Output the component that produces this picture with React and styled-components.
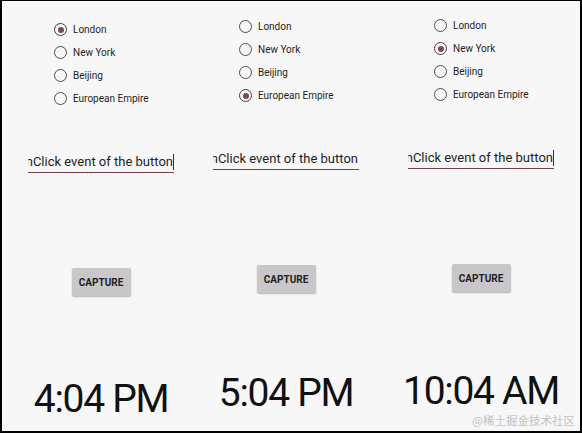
import React from "react";
import styled, { createGlobalStyle } from "styled-components";

const GlobalStyle = createGlobalStyle`
  html, body {
    margin: 0;
    padding: 0;
    background: #000;
  }
  * {
    box-sizing: border-box;
  }
`;

const Frame = styled.div`
  position: relative;
  width: 582px;
  height: 433px;
  border-style: solid;
  border-color: #000;
  border-width: 1px 2px 2px 2px;
  background: #f7f7f7;
  overflow: hidden;
  display: flex;
  font-family: Roboto, "Noto Sans", sans-serif;
  color: #1e1e1e;
`;

const Column = styled.div`
  width: ${(p) => p.$width}px;
  flex: none;
  display: flex;
  flex-direction: column;
  align-items: center;
  padding-top: ${(p) => p.$top}px;
  padding-left: ${(p) => (p.$dx > 0 ? p.$dx * 2 : 0)}px;
  padding-right: ${(p) => (p.$dx < 0 ? -p.$dx * 2 : 0)}px;
`;

const RadioGroup = styled.div`
  width: 94px;
  display: flex;
  flex-direction: column;
`;

const RadioRow = styled.label`
  height: 23px;
  display: flex;
  align-items: center;
  gap: 6px;
  font-size: 10px;
  white-space: nowrap;
  color: #1e1e1e;
`;

const RadioCircle = styled.span`
  width: 13px;
  height: 13px;
  flex: none;
  border-radius: 50%;
  border: 1.7px solid ${(p) => (p.$checked ? "#4a3a40" : "#4d4d4d")};
  display: flex;
  align-items: center;
  justify-content: center;

  &::after {
    content: "";
    width: 6px;
    height: 6px;
    border-radius: 50%;
    background: ${(p) => (p.$checked ? "#7a4658" : "transparent")};
  }
`;

const Field = styled.div`
  margin-top: 44px;
  width: 146px;
  display: flex;
  align-items: flex-end;
  border-bottom: 1.5px solid #7c3d4d;
  padding-bottom: 2px;
`;

const FieldText = styled.div`
  flex: 1;
  min-width: 0;
  overflow: hidden;
  display: flex;
  justify-content: flex-end;
  font-size: 13px;
  line-height: 16px;
  white-space: nowrap;
  color: #1e1e1e;
`;

const Caret = styled.span`
  width: 1px;
  height: 16px;
  flex: none;
  background: ${(p) => (p.$show ? "#333" : "transparent")};
`;

const CaptureButton = styled.button`
  margin-top: 95px;
  width: 59px;
  height: 28px;
  border: none;
  border-radius: 2px;
  background: #c9c7c9;
  box-shadow: 0 1px 1.5px rgba(0, 0, 0, 0.28);
  font-family: Roboto, "Noto Sans", sans-serif;
  font-weight: 700;
  font-size: 10px;
  color: #222;
  padding: 0;
`;

const Clock = styled.div`
  margin-top: ${(p) => p.$gap}px;
  font-size: 39px;
  line-height: 46px;
  letter-spacing: -1.3px;
  white-space: nowrap;
  color: #111;
`;

const Watermark = styled.div`
  position: absolute;
  right: 5px;
  bottom: 3px;
  font-family: "Noto Sans CJK SC", "Noto Sans", sans-serif;
  font-size: 11.5px;
  color: #c2c2c2;
`;

const cities = ["London", "New York", "Beijing", "European Empire"];

const screens = [
  { width: 194, top: 17, dx: 2, selected: "London", caret: true, time: "4:04 PM", gap: 80 },
  { width: 194, top: 14, dx: -7, selected: "European Empire", caret: false, time: "5:04 PM", gap: 77 },
  { width: 192, top: 13, dx: -5, selected: "New York", caret: true, time: "10:04 AM", gap: 76 },
];

const Screen = ({ s }) => (
  <Column $width={s.width} $top={s.top} $dx={s.dx}>
    <RadioGroup>
      {cities.map((c) => (
        <RadioRow key={c}>
          <RadioCircle $checked={c === s.selected} />
          {c}
        </RadioRow>
      ))}
    </RadioGroup>
    <Field>
      <FieldText>
        <span>onClick event of the button</span>
      </FieldText>
      <Caret $show={s.caret} />
    </Field>
    <CaptureButton>CAPTURE</CaptureButton>
    <Clock $gap={s.gap}>{s.time}</Clock>
  </Column>
);

export default function App() {
  return (
    <>
      <GlobalStyle />
      <Frame>
        {screens.map((s, i) => (
          <Screen key={i} s={s} />
        ))}
        <Watermark>@稀土掘金技术社区</Watermark>
      </Frame>
    </>
  );
}
